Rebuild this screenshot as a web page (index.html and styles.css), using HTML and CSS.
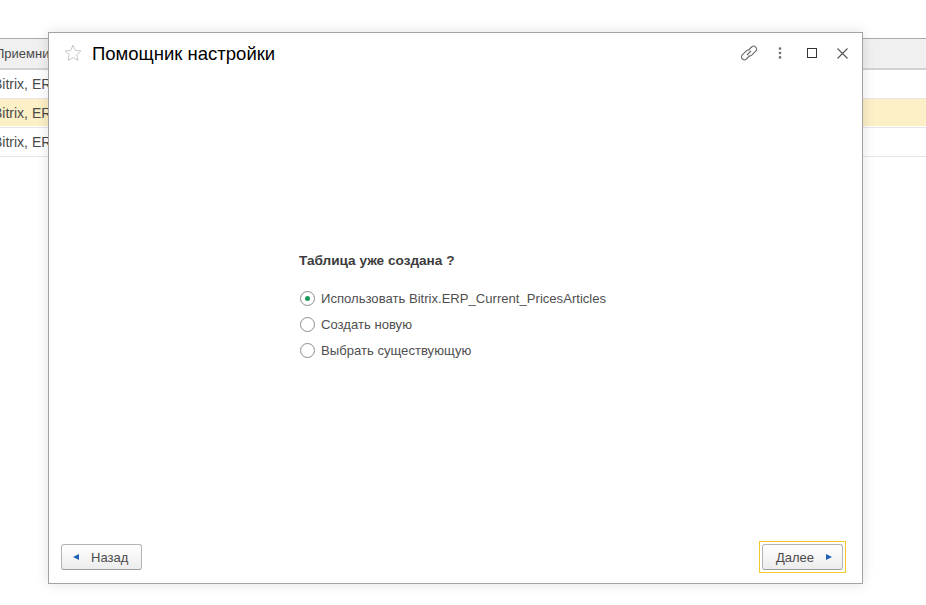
FILE: index.html
```html
<!DOCTYPE html>
<html lang="ru">
<head>
<meta charset="utf-8">
<title>Помощник настройки</title>
<link rel="stylesheet" href="styles.css">
</head>
<body>
<div class="table">
  <div class="row head"><span class="cell">Приемник</span></div>
  <div class="row"><span class="cell">Bitrix, ERP</span></div>
  <div class="row current"><span class="cell">Bitrix, ERP</span></div>
  <div class="row"><span class="cell">Bitrix, ERP</span></div>
</div>
<section class="dialog">
  <header class="title-bar">
    <svg class="star" width="18" height="18" viewBox="0 0 18 18"><path d="M9 1.2l2.3 5.3 5.7.5-4.3 3.8 1.3 5.6L9 13.5l-5 2.9 1.3-5.6L1 7l5.7-.5z" fill="#fff" stroke="#c4c8cc" stroke-width="1"/></svg>
    <h1 class="title">Помощник настройки</h1>
    <div class="tools">
      <svg class="tool link" width="16" height="16" viewBox="0 0 16 16" fill="none" stroke="#6a6a6a" stroke-width="1.1"><path d="M6 10l4-4"/><path d="M7.6 5l3-3a2.9 2.9 0 0 1 4.1 4.1l-4 4a2.9 2.9 0 0 1-3 .7"/><path d="M8.4 11l-3 3a2.9 2.9 0 0 1-4.1-4.1l4-4a2.9 2.9 0 0 1 3-.7"/></svg>
      <svg class="tool more" width="4" height="12" viewBox="0 0 4 12" fill="#707070"><circle cx="2" cy="1.6" r="1.3"/><circle cx="2" cy="6" r="1.3"/><circle cx="2" cy="10.4" r="1.3"/></svg>
      <span class="tool maximize"></span>
      <svg class="tool close" width="11" height="11" viewBox="0 0 11 11" stroke="#555" stroke-width="1.1"><path d="M.5.5l10 10M10.5.5l-10 10"/></svg>
    </div>
  </header>
  <main class="body">
    <p class="question">Таблица уже создана ?</p>
    <div class="options">
      <div class="option"><span class="radio on"></span>Использовать Bitrix.ERP_Current_PricesArticles</div>
      <div class="option"><span class="radio"></span>Создать новую</div>
      <div class="option"><span class="radio"></span>Выбрать существующую</div>
    </div>
  </main>
  <footer class="footer">
    <div class="btn-wrap"><button class="btn back"><span class="arrow left"></span>Назад</button></div>
    <div class="btn-wrap default"><button class="btn next"><span>Далее</span><span class="arrow right"></span></button></div>
  </footer>
</section>
</body>
</html>
```
FILE: styles.css
```css
* { box-sizing: border-box; }
html, body { margin: 0; height: 100%; }
body {
  background: #fff;
  overflow: hidden;
  font-family: "Liberation Sans", Arial, sans-serif;
  font-size: 13px;
  color: #4b4b4b;
  padding-top: 38px;
  position: relative;
}
.table { width: 100%; }
.row {
  height: 29px;
  border-bottom: 1px solid #e5e5e5;
  display: flex;
  align-items: center;
  white-space: nowrap;
}
.cell { margin-left: -7px; font-size: 14px; color: #4a4a4a; }
.row.head {
  height: 32px;
  background: #f0f0f0;
  border-top: 1px solid #a9a9a9;
  border-bottom: 2px solid #d2d2d2;
}
.row.head .cell { font-size: 13px; margin-left: -5px; }
.row.current { background: #fdf0c6; box-shadow: inset 0 -1px 0 #fff; }

.dialog {
  position: absolute;
  left: 48px;
  top: 32px;
  width: 815px;
  height: 552px;
  background: #fff;
  border: 1px solid #a3a3a3;
  box-shadow: 0 0 12px rgba(0, 0, 0, .12);
  display: flex;
  flex-direction: column;
}
.title-bar {
  height: 40px;
  display: flex;
  align-items: center;
  padding: 0 14px 0 15px;
}
.star { flex: none; }
.title {
  margin: 2px 0 0 10px;
  font-size: 18.5px;
  font-weight: 400;
  color: #000;
  white-space: nowrap;
}
.tools { margin-left: auto; display: flex; align-items: center; }
.tool { display: block; flex: none; }
.more { margin-left: 21px; }
.maximize {
  margin-left: 25px;
  width: 10px;
  height: 10px;
  border: 1.5px solid #333;
}
.close { margin-left: 20px; }

.body {
  flex: 1;
  padding: 180px 0 0 250px;
}
.question {
  margin: 0 0 16px;
  font-size: 13.6px;
  font-weight: 700;
  line-height: 16px;
  color: #3c3c3c;
}
.option {
  height: 26px;
  display: flex;
  align-items: center;
  font-size: 13.1px;
  color: #4f4f4f;
  white-space: nowrap;
}
.radio {
  width: 15px;
  height: 15px;
  margin: 0 6px 0 1px;
  border-radius: 50%;
  border: 1px solid #8c8c8c;
  background: #fff;
  display: flex;
  align-items: center;
  justify-content: center;
}
.radio.on::after {
  content: "";
  width: 5px;
  height: 5px;
  border-radius: 50%;
  background: #1b9a5a;
}
.footer {
  display: flex;
  justify-content: space-between;
  align-items: center;
  padding: 0 16px 10px 9px;
}
.btn-wrap { padding: 2px; border: 1px solid transparent; }
.btn-wrap.default { border-color: #f5c92a; }
.btn {
  height: 26px;
  border: 1px solid #b4b4b4;
  border-bottom-color: #9c9c9c;
  border-radius: 3px;
  background: linear-gradient(#fff, #ececec);
  font: 13px "Liberation Sans", Arial, sans-serif;
  color: #4b4b4b;
  display: flex;
  align-items: center;
  width: 81px;
}
.btn.back { padding: 0 10px 0 11px; }
.btn.next { padding: 0 10px 0 13px; }
.arrow { width: 0; height: 0; border-style: solid; border-width: 3.5px 0; border-color: transparent; }
.arrow.left { border-right: 6px solid #1f5fb4; margin-right: 12px; }
.arrow.right { border-left: 6px solid #1f5fb4; margin-left: auto; }
```
